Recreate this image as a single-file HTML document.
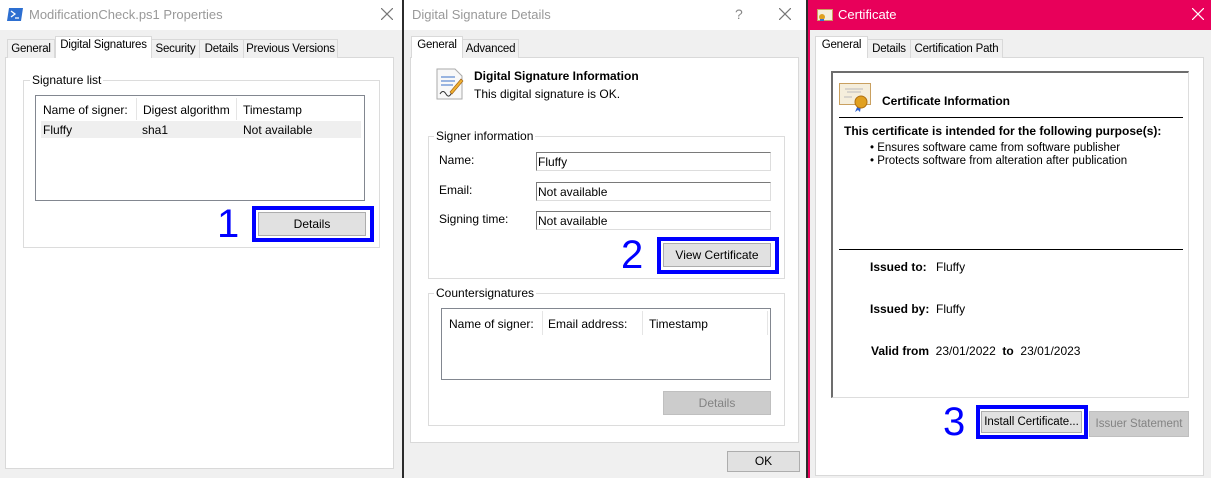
<!DOCTYPE html>
<html><head><meta charset="utf-8"><style>
*{box-sizing:border-box;margin:0;padding:0}
body{width:1211px;height:478px;position:relative;overflow:hidden;background:#f0f0f0;font-family:"Liberation Sans",sans-serif;font-size:12px;color:#000}
.a{position:absolute}
.panel{position:absolute;background:#fff;border:1px solid #d9d9d9}
.tab{position:absolute;background:#f0f0f0;border:1px solid #d9d9d9;border-bottom:none;padding:3px 0 0 0;height:19px;white-space:nowrap;text-align:center;font-size:11.5px;letter-spacing:-.2px}
.tab.sel{background:#fff;height:22px;padding-top:2px;z-index:2}
.grp{position:absolute;border:1px solid #dcdcdc}
.grp .lg{position:absolute;top:-8px;left:6px;background:#fff;padding:0 2px}
.btn{position:absolute;background:#e1e1e1;border:1px solid #adadad;text-align:center}
.dis{background:#ccc;border-color:#bfbfbf;color:#838383}
.blue{position:absolute;border:4px solid #0000ff}
.num{position:absolute;color:#0000ff;font-size:40px;line-height:40px}
.inp{position:absolute;border:1px solid #7a7a7a;border-right-color:#ddd;border-bottom-color:#ddd;padding:2px 1px;background:#fff;height:19px}
.list{position:absolute;border:1px solid #828790;background:#fff}
.b{font-weight:bold}
</style></head><body>
<!-- dialog 1 -->
<div class="a" style="left:0;top:0;width:402px;height:30px;background:#fff"></div>
<svg class="a" style="left:7px;top:8px" width="16" height="13"><polygon points="2,0 16,0 14,13 0,13" fill="#2d6fd1"/><path d="M4,3 L8,6 L4,9 M8,10 h4" stroke="#fff" stroke-width="1.3" fill="none"/></svg>
<div class="a" style="left:29px;top:7px;font-size:13px;color:#999">ModificationCheck.ps1 Properties</div>
<svg class="a" style="left:381px;top:8px" width="12" height="12"><path d="M0,0L12,12M12,0L0,12" stroke="#777" stroke-width="1.2"/></svg>
<div class="panel" style="left:5px;top:57px;width:389px;height:412px"></div>
<div class="tab" style="left:7px;top:39px;width:48px">General</div>
<div class="tab sel" style="left:55px;top:36px;width:97px">Digital Signatures</div>
<div class="tab" style="left:151px;top:39px;width:49px">Security</div>
<div class="tab" style="left:199px;top:39px;width:45px">Details</div>
<div class="tab" style="left:243px;top:39px;width:95px">Previous Versions</div>
<div class="grp" style="left:23px;top:80px;width:357px;height:168px"><span class="lg">Signature list</span></div>
<div class="list" style="left:35px;top:95px;width:330px;height:106px">
 <div class="a" style="left:7px;top:7px">Name of signer:</div>
 <div class="a" style="left:100px;top:2px;width:1px;height:22px;background:#e5e5e5"></div>
 <div class="a" style="left:107px;top:7px">Digest algorithm</div>
 <div class="a" style="left:200px;top:2px;width:1px;height:22px;background:#e5e5e5"></div>
 <div class="a" style="left:207px;top:7px">Timestamp</div>
 <div class="a" style="left:5px;top:25px;width:320px;height:17px;background:#efefef"></div>
 <div class="a" style="left:7px;top:27px">Fluffy</div>
 <div class="a" style="left:106px;top:27px">sha1</div>
 <div class="a" style="left:207px;top:27px">Not available</div>
</div>
<div class="num" style="left:217px;top:204px">1</div>
<div class="blue" style="left:252px;top:206px;width:122px;height:36px"></div>
<div class="btn" style="left:258px;top:212px;width:108px;height:24px;line-height:22px">Details</div>
<div class="a" style="left:402px;top:0;width:2px;height:478px;background:#2b2b2b"></div>
<!-- dialog 2 -->
<div class="a" style="left:404px;top:0;width:403px;height:30px;background:#fff"></div>
<div class="a" style="left:412px;top:7px;font-size:13px;color:#999">Digital Signature Details</div>
<div class="a" style="left:735px;top:6px;font-size:14px;color:#888">?</div>
<svg class="a" style="left:779px;top:8px" width="12" height="12"><path d="M0,0L12,12M12,0L0,12" stroke="#777" stroke-width="1.2"/></svg>
<div class="panel" style="left:410px;top:57px;width:389px;height:386px"></div>
<div class="tab sel" style="left:411px;top:36px;width:52px">General</div>
<div class="tab" style="left:462px;top:39px;width:57px">Advanced</div>
<svg class="a" style="left:436px;top:68px" width="28" height="32"><path d="M1,1 H19 L26,8 V31 H1Z" fill="#f8f8f8" stroke="#aaa"/><path d="M5,9h14M5,13h14M5,17h12" stroke="#3a6fc8"/><path d="M4,26 q3,-5 6,0 t6,-2" stroke="#333" fill="none"/><path d="M14,24 L25,11 L27,13 L16,26Z" fill="#f0b030" stroke="#a06010" stroke-width=".6"/></svg>
<div class="a b" style="left:474px;top:69px">Digital Signature Information</div>
<div class="a" style="left:474px;top:87px">This digital signature is OK.</div>
<div class="grp" style="left:428px;top:136px;width:357px;height:143px"><span class="lg" style="left:5px">Signer information</span></div>
<div class="a" style="left:439px;top:153px">Name:</div>
<div class="a" style="left:439px;top:183px">Email:</div>
<div class="a" style="left:439px;top:212px">Signing time:</div>
<div class="inp" style="left:536px;top:152px;width:235px">Fluffy</div>
<div class="inp" style="left:536px;top:182px;width:235px">Not available</div>
<div class="inp" style="left:536px;top:211px;width:235px">Not available</div>
<div class="num" style="left:621px;top:235px">2</div>
<div class="blue" style="left:657px;top:237px;width:122px;height:37px"></div>
<div class="btn" style="left:663px;top:243px;width:108px;height:24px;line-height:22px">View Certificate</div>
<div class="grp" style="left:428px;top:293px;width:357px;height:133px"><span class="lg" style="left:5px">Countersignatures</span></div>
<div class="list" style="left:441px;top:308px;width:330px;height:72px">
 <div class="a" style="left:7px;top:8px">Name of signer:</div>
 <div class="a" style="left:100px;top:2px;width:1px;height:24px;background:#e5e5e5"></div>
 <div class="a" style="left:106px;top:8px">Email address:</div>
 <div class="a" style="left:200px;top:2px;width:1px;height:24px;background:#e5e5e5"></div>
 <div class="a" style="left:207px;top:8px">Timestamp</div>
 <div class="a" style="left:325px;top:2px;width:1px;height:24px;background:#e5e5e5"></div>
</div>
<div class="btn dis" style="left:663px;top:391px;width:108px;height:24px;line-height:22px">Details</div>
<div class="btn" style="left:727px;top:451px;width:73px;height:21px;line-height:19px">OK</div>
<div class="a" style="left:806px;top:0;width:2px;height:478px;background:#2b2b2b"></div>
<div class="a" style="left:808px;top:0;width:2px;height:478px;background:#e8005a"></div>
<!-- dialog 3 -->
<div class="a" style="left:810px;top:0;width:401px;height:30px;background:#e8005a"></div>
<svg class="a" style="left:817px;top:9px" width="16" height="12"><rect x=".5" y=".5" width="15" height="11" fill="#f5eedc" stroke="#c9a060"/><circle cx="5" cy="8" r="3" fill="#e0a020"/><rect x="3" y="10" width="4" height="2" fill="#3a6fd0"/></svg>
<div class="a" style="left:838px;top:7px;font-size:13px;color:#fff">Certificate</div>
<svg class="a" style="left:1192px;top:8px" width="12" height="12"><path d="M0,0L12,12M12,0L0,12" stroke="#fff" stroke-width="1.2"/></svg>
<div class="panel" style="left:815px;top:57px;width:389px;height:419px"></div>
<div class="tab sel" style="left:815px;top:36px;width:53px">General</div>
<div class="tab" style="left:867px;top:39px;width:44px">Details</div>
<div class="tab" style="left:910px;top:39px;width:93px">Certification Path</div>
<div class="a" style="left:831px;top:71px;width:358px;height:327px;background:#fff;border-top:2px solid #6d6d6d;border-left:2px solid #6d6d6d;border-right:1px solid #ddd;border-bottom:1px solid #ddd"></div>
<svg class="a" style="left:839px;top:83px" width="33" height="30"><rect x=".5" y=".5" width="31" height="21" fill="#f5eedc" stroke="#c9a060"/><path d="M6,6h18M8,9h14M5,14h8" stroke="#bbb"/><path d="M19,22 l-3,7 l3,-2 l2,2 l1,-6Z" fill="#2f62d0"/><circle cx="22" cy="19" r="6" fill="#e0a020" stroke="#b07010"/></svg>
<div class="a b" style="left:882px;top:94px">Certificate Information</div>
<div class="a" style="left:839px;top:117px;width:344px;height:1px;background:#000"></div>
<div class="a b" style="left:844px;top:124px">This certificate is intended for the following purpose(s):</div>
<div class="a" style="left:870px;top:142px;font-size:11.5px">• Ensures software came from software publisher</div>
<div class="a" style="left:870px;top:155px;font-size:11.5px">• Protects software from alteration after publication</div>
<div class="a" style="left:839px;top:249px;width:344px;height:1px;background:#000"></div>
<div class="a" style="left:870px;top:260px"><b>Issued to:</b></div><div class="a" style="left:936px;top:260px">Fluffy</div>
<div class="a" style="left:870px;top:302px"><b>Issued by:</b></div><div class="a" style="left:936px;top:302px">Fluffy</div>
<div class="a" style="left:871px;top:344px"><b>Valid from</b>&nbsp; 23/01/2022&nbsp; <b>to</b>&nbsp; 23/01/2023</div>
<div class="num" style="left:943px;top:402px">3</div>
<div class="blue" style="left:976px;top:405px;width:112px;height:34px"></div>
<div class="btn" style="left:981px;top:411px;width:101px;height:22px;line-height:20px;font-size:11.5px">Install Certificate...</div>
<div class="btn dis" style="left:1089px;top:411px;width:100px;height:26px;line-height:24px;font-size:11.5px">Issuer Statement</div>
</body></html>
